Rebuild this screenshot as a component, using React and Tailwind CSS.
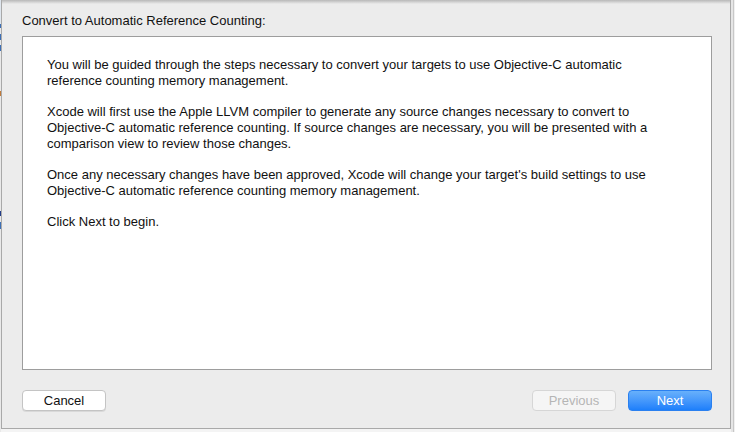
export default function App() {
  const font = { fontFamily: '"Liberation Sans", Arial, sans-serif' };
  return (
    <div className="w-[735px] h-[432px] flex overflow-hidden bg-[#f4f4f4]" style={font}>
      <div className="w-[1px] h-full flex flex-col bg-[#e9e9e9]">
        <div className="h-[24px] bg-[#dfe6ee]" />
        <div className="h-[4px] bg-[#3d6fb5]" />
        <div className="h-[6px]" />
        <div className="h-[6px] bg-[#3d6fb5]" />
        <div className="h-[5px]" />
        <div className="h-[6px] bg-[#3d6fb5]" />
        <div className="h-[40px]" />
        <div className="h-[5px] bg-[#c07a3a]" />
        <div className="h-[115px]" />
        <div className="h-[5px] bg-[#223c88]" />
        <div className="h-[6px]" />
        <div className="h-[7px] bg-[#3d6fb5]" />
        <div className="flex-1" />
      </div>
      <div className="w-[730px] h-[429px] relative flex flex-col bg-[#ececec] border-l border-r border-b border-[#a9a9a9] pl-[20px] pr-[18px] pt-[12px]">
        <div className="absolute left-0 right-0 top-0 h-[4px] bg-gradient-to-b from-[#b8b8b8] to-[#ececec]" />
        <div className="text-[13px] leading-[17px] text-[#111]">Convert to Automatic Reference Counting:</div>
        <div className="mt-[7px] h-[334px] bg-white border border-[#9d9d9d] pl-[24px] pr-[20px] pt-[20px] text-[13px] leading-[16px] text-[#111] flex flex-col gap-[15px]">
          <p>You will be guided through the steps necessary to convert your targets to use Objective-C automatic<br />reference counting memory management.</p>
          <p>Xcode will first use the Apple LLVM compiler to generate any source changes necessary to convert to<br />Objective-C automatic reference counting. If source changes are necessary, you will be presented with a<br />comparison view to review those changes.</p>
          <p>Once any necessary changes have been approved, Xcode will change your target's build settings to use<br />Objective-C automatic reference counting memory management.</p>
          <p>Click Next to begin.</p>
        </div>
        <div className="mt-[20px] flex items-center">
          <button className="w-[84px] h-[21px] rounded-[4px] bg-white border border-[#c4c4c4] shadow-[0_1px_0_rgba(0,0,0,0.08)] text-[13px] text-[#111] leading-none">Cancel</button>
          <div className="flex-1" />
          <button className="w-[84px] h-[21px] rounded-[4px] bg-[#f5f5f5] border border-[#d6d6d6] text-[13px] text-[#b5b5b5] leading-none">Previous</button>
          <button className="ml-[12px] w-[84px] h-[21px] rounded-[4px] bg-gradient-to-b from-[#68b0fb] to-[#1c7ffb] border border-[#2a80f0] text-[13px] text-white leading-none">Next</button>
        </div>
      </div>
      <div className="flex-1 h-full flex bg-[#f0f0f0]">
        <div className="w-[2px] h-full bg-[#e6e6e6]" />
        <div className="w-[1px] h-full bg-[#c8c8c8]" />
      </div>
    </div>
  );
}
